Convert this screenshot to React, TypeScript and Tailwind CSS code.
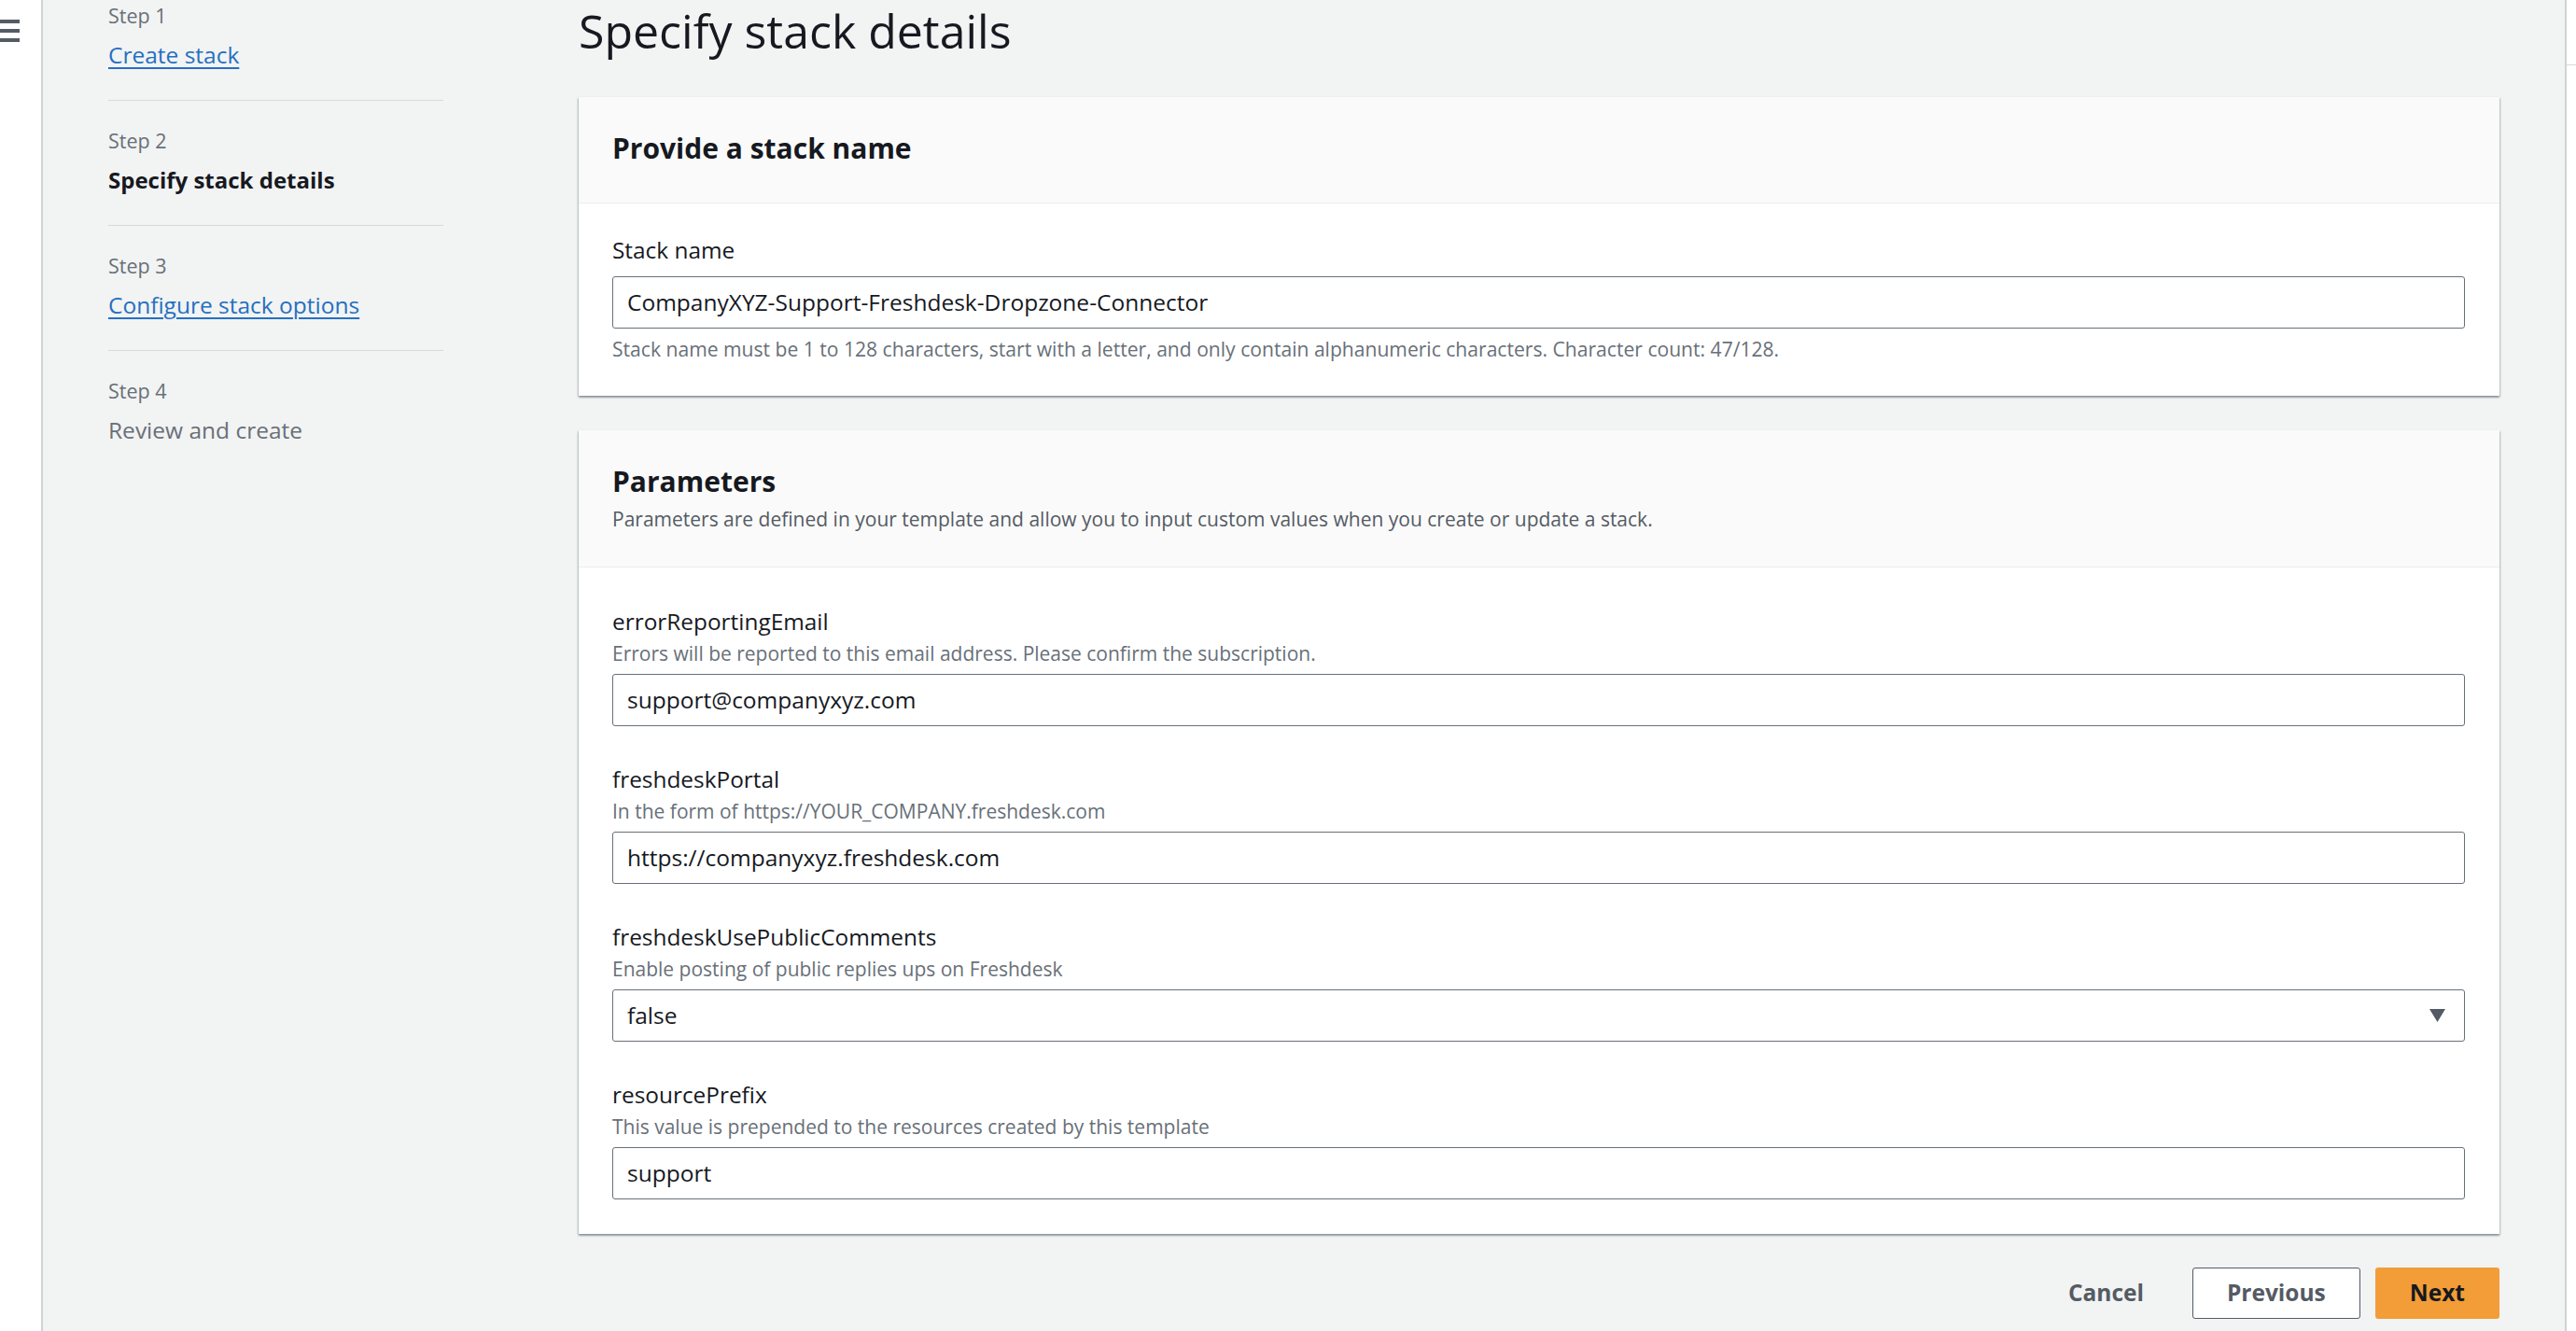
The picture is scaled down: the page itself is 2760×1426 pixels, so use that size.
import React from 'react';

type Step = { step: string; label: string; kind: 'link' | 'current' | 'disabled' };

const steps: Step[] = [
  { step: 'Step 1', label: 'Create stack', kind: 'link' },
  { step: 'Step 2', label: 'Specify stack details', kind: 'current' },
  { step: 'Step 3', label: 'Configure stack options', kind: 'link' },
  { step: 'Step 4', label: 'Review and create', kind: 'disabled' },
];

type Param = { name: string; hint: string; value: string; select?: boolean };

const params: Param[] = [
  {
    name: 'errorReportingEmail',
    hint: 'Errors will be reported to this email address. Please confirm the subscription.',
    value: 'support@companyxyz.com',
  },
  {
    name: 'freshdeskPortal',
    hint: 'In the form of https://YOUR_COMPANY.freshdesk.com',
    value: 'https://companyxyz.freshdesk.com',
  },
  {
    name: 'freshdeskUsePublicComments',
    hint: 'Enable posting of public replies ups on Freshdesk',
    value: 'false',
    select: true,
  },
  {
    name: 'resourcePrefix',
    hint: 'This value is prepended to the resources created by this template',
    value: 'support',
  },
];

const cardShadow =
  'shadow-[0_2px_2px_0_rgba(0,28,36,0.3),1px_1px_2px_0_rgba(0,28,36,0.15),-1px_1px_2px_0_rgba(0,28,36,0.15)]';

const StepNav: React.FC = () => (
  <nav className="w-[359px] shrink-0 -mt-[26px]">
    {steps.map((s, i) => (
      <div key={s.step}>
        <div className="pt-[28px] pb-[30px]">
          <div className="text-[21.5px] leading-[30px] text-[#687078]">{s.step}</div>
          <div className="mt-[9px] text-[24.5px] leading-[36px]">
            {s.kind === 'link' && (
              <a className="text-[#2570c0] underline decoration-2 underline-offset-[4px]">{s.label}</a>
            )}
            {s.kind === 'current' && <span className="text-[24px] font-bold text-[#16191f]">{s.label}</span>}
            {s.kind === 'disabled' && <span className="text-[#687078]">{s.label}</span>}
          </div>
        </div>
        {i < steps.length - 1 && <div className="h-px bg-[#d5dbdb]" />}
      </div>
    ))}
  </nav>
);

const Field: React.FC<{ param: Param }> = ({ param }) => (
  <div>
    <div className="text-[24.4px] leading-[32px] text-[#16191f]">{param.name}</div>
    <div className="mt-[4px] text-[21px] leading-[28px] text-[#687078]">{param.hint}</div>
    <div className="mt-[8px] h-[56px] flex items-center justify-between pl-[15px] pr-[20px] bg-white border border-[#687078] rounded-[3px]">
      <span className="text-[24.5px] leading-[32px] text-[#16191f]">{param.value}</span>
      {param.select && (
        <svg width="17" height="14" viewBox="0 0 17 14">
          <path d="M0 0 H17 L8.5 14 Z" fill="#545b64" />
        </svg>
      )}
    </div>
  </div>
);

export default function App() {
  return (
    <div className="flex h-screen w-full overflow-hidden font-['Open_Sans',sans-serif]">
      {/* collapsed side nav */}
      <div className="w-[46px] shrink-0 bg-white border-r-2 border-[#cfd4d4] pt-[21px]">
        <div className="flex w-[21px] flex-col gap-[6px]">
          <div className="h-[4px] bg-[#545b64]" />
          <div className="h-[4px] bg-[#545b64]" />
          <div className="h-[4px] bg-[#545b64]" />
        </div>
      </div>

      <div className="flex flex-1 bg-[#f2f3f3] px-[70px]">
        <StepNav />

        <main className="ml-[145px] flex-1 pt-[5px]">
          <h1 className="text-[50px] leading-[56px] font-normal text-[#16191f]">Specify stack details</h1>

          <section className={`mt-[43px] bg-white ${cardShadow}`}>
            <div className="bg-[#fafafa] border-b border-[#eaeded] pl-[36px] pr-[37px] pt-[37px] pb-[40px]">
              <h2 className="text-[30px] leading-[36px] font-bold text-[#16191f]">Provide a stack name</h2>
            </div>
            <div className="pl-[36px] pr-[37px] pt-[34px] pb-[36px]">
              <div className="text-[24.4px] leading-[32px] text-[#16191f]">Stack name</div>
              <div className="mt-[12px] h-[56px] flex items-center pl-[15px] bg-white border border-[#687078] rounded-[3px]">
                <span className="text-[24.5px] leading-[32px] text-[#16191f]">
                  CompanyXYZ-Support-Freshdesk-Dropzone-Connector
                </span>
              </div>
              <div className="mt-[8px] text-[21.1px] leading-[28px] text-[#687078]">
                Stack name must be 1 to 128 characters, start with a letter, and only contain alphanumeric
                characters. Character count: 47/128.
              </div>
            </div>
          </section>

          <section className={`mt-[37px] bg-white ${cardShadow}`}>
            <div className="bg-[#fafafa] border-b border-[#eaeded] pl-[36px] pr-[37px] pt-[37px] pb-[36px]">
              <h2 className="text-[30px] leading-[36px] font-bold text-[#16191f]">Parameters</h2>
              <p className="mt-[7px] text-[21px] leading-[30px] text-[#545b64]">
                Parameters are defined in your template and allow you to input custom values when you create or
                update a stack.
              </p>
            </div>
            <div className="flex flex-col gap-[41px] pl-[36px] pr-[37px] pt-[42px] pb-[37px]">
              {params.map((p) => (
                <Field key={p.name} param={p} />
              ))}
            </div>
          </section>

          <div className="mt-[36px] flex justify-end">
            <button className="h-[55px] px-[38px] text-[24.5px] font-bold text-[#545b64]">Cancel</button>
            <button className="ml-[14px] h-[55px] px-[36px] bg-white border border-[#545b64] rounded-[3px] text-[24.5px] font-bold text-[#545b64]">
              Previous
            </button>
            <button className="ml-[16px] h-[55px] px-[37px] bg-[#f29d38] rounded-[3px] text-[24.5px] font-bold text-[#16191f]">
              Next
            </button>
          </div>
        </main>
      </div>

      {/* right edge */}
      <div className="w-[12px] shrink-0 bg-white border-l-2 border-[#cfd4d4]">
        <div className="mt-[69px] h-px bg-[#d5dbdb]" />
      </div>
    </div>
  );
}
